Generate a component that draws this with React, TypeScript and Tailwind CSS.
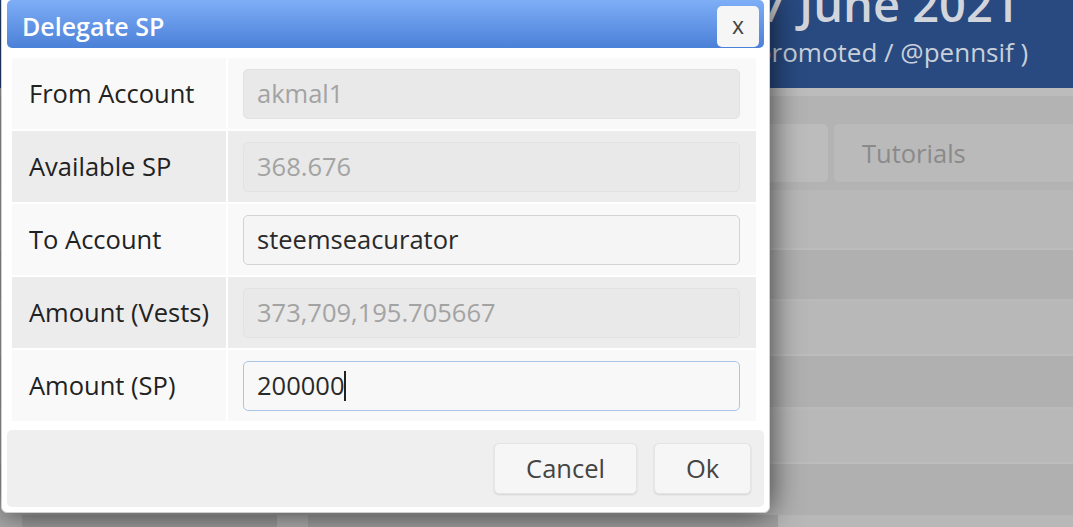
import React from 'react';

const rows = [
  { label: 'From Account', value: 'akmal1', disabled: true },
  { label: 'Available SP', value: '368.676', disabled: true },
  { label: 'To Account', value: 'steemseacurator', disabled: false },
  { label: 'Amount (Vests)', value: '373,709,195.705667', disabled: true },
  { label: 'Amount (SP)', value: '200000', disabled: false, focused: true },
];

function Field({ value, disabled, focused }: { value: string; disabled: boolean; focused?: boolean }) {
  if (disabled) {
    return (
      <div className="flex h-[50px] w-full items-center rounded-[5px] border border-[#e2e2e2] bg-[#e9e9e9] px-[13px] text-[25.5px] text-[#a3a3a3]">
        {value}
      </div>
    );
  }
  return (
    <div
      className={
        focused
          ? 'flex h-[50px] w-full items-center rounded-[5px] border border-[#a9c6e6] bg-[#f8f8f8] px-[13px] text-[25.5px] text-[#2a2a2a]'
          : 'flex h-[50px] w-full items-center rounded-[5px] border border-[#d3d3d3] bg-[#f5f5f5] px-[13px] text-[25.5px] text-[#2a2a2a]'
      }
    >
      <span>{value}</span>
      {focused && <span className="h-[30px] w-[2px] bg-[#222]" />}
    </div>
  );
}

function Background() {
  return (
    <div className="flex h-[527px] w-full flex-col overflow-hidden bg-[#b6b6b6]">
      <div className="flex h-[88px] shrink-0 flex-col bg-[#284a80] pl-[760px] text-[#d2d6dc]">
        <div className="mt-[-26px] whitespace-nowrap text-[47px] font-semibold leading-[60px]">7 June 2021</div>
        <div className="ml-[-12px] mt-0 whitespace-nowrap text-[26px] leading-[36px] text-[#c9d0da]">
          (promoted / @pennsif )
        </div>
      </div>
      <div className="h-[8px] shrink-0 bg-[#bcbcbc]" />
      <div className="flex h-[94px] shrink-0 items-start gap-[6px] bg-[#b3b3b3] pl-[560px] pt-[28px]">
        <div className="h-[58px] w-[268px] rounded-[5px] bg-[#bcbcbc]" />
        <div className="flex h-[58px] flex-1 items-center rounded-l-[5px] bg-[#bababa] pl-[28px] text-[25.5px] text-[#8a8a8a]">
          Tutorials
        </div>
      </div>
      <div className="h-[60px] shrink-0 border-b-2 border-[#bdbdbd] bg-[#b8b8b8]" />
      <div className="h-[51px] shrink-0 border-b-2 border-[#bababa] bg-[#b0b0b0]" />
      <div className="h-[55px] shrink-0 border-b-2 border-[#bdbdbd] bg-[#b8b8b8]" />
      <div className="h-[53px] shrink-0 border-b-2 border-[#bababa] bg-[#b0b0b0]" />
      <div className="h-[55px] shrink-0 border-b-2 border-[#bdbdbd] bg-[#b8b8b8]" />
      <div className="h-[51px] shrink-0 bg-[#b0b0b0]" />
      <div className="flex flex-1 bg-[#b8b8b8]">
        <div className="w-[22px] bg-[#acacac]" />
        <div className="w-[255px] bg-[#9e9e9e]" />
        <div className="w-[31px] bg-[#b0b0b0]" />
        <div className="w-[470px] bg-[#a2a2a2]" />
        <div className="flex-1 bg-[#b8b8b8]" />
      </div>
    </div>
  );
}

export default function App() {
  return (
    <div className="relative h-[527px] w-[1073px] overflow-hidden font-['Open_Sans','Noto_Sans',sans-serif]">
      <Background />
      <div className="absolute left-[1px] top-[-6px] flex h-[519px] w-[769px] flex-col rounded-[6px] border border-[#d0d0d0] bg-white p-[5px] shadow-[0_0_32px_rgba(0,0,0,0.7)]">
        <div className="flex h-[48px] shrink-0 items-center justify-between rounded-[5px] bg-gradient-to-b from-[#7eaef6] to-[#4b80d8] pl-[15px] pr-[5px] pt-[5px]">
          <span className="text-[25px] font-semibold text-white">Delegate SP</span>
          <button
            type="button"
            className="flex h-[41px] w-[42px] items-center justify-center rounded-[5px] bg-[#f6f6f6] pb-[3px] text-[23px] text-[#444]"
          >
            x
          </button>
        </div>
        <div className="mt-[10px] flex flex-col gap-[2px] pl-[5px] pr-[8px]">
          {rows.map((r, i) => (
            <div key={r.label} className="flex h-[71px] gap-[2px] bg-white">
              <div
                className={
                  i % 2 === 0
                    ? 'flex w-[214px] items-center bg-[#f9f9f9] pl-[17px] text-[25.5px] text-[#222]'
                    : 'flex w-[214px] items-center bg-[#ececec] pl-[17px] text-[25.5px] text-[#222]'
                }
              >
                {r.label}
              </div>
              <div
                className={
                  i % 2 === 0
                    ? 'flex flex-1 items-center bg-[#f9f9f9] pl-[15px] pr-[16px]'
                    : 'flex flex-1 items-center bg-[#ececec] pl-[15px] pr-[16px]'
                }
              >
                <Field value={r.value} disabled={r.disabled} focused={r.focused} />
              </div>
            </div>
          ))}
        </div>
        <div className="mt-auto flex h-[77px] shrink-0 items-start justify-end gap-[17px] rounded-[5px] bg-[#efefef] pr-[13px] pt-[13px]">
          <button
            type="button"
            className="h-[51px] w-[143px] rounded-[5px] border border-[#e4e4e4] bg-[#f6f6f6] text-[25.5px] text-[#444] shadow-[0_1px_2px_rgba(0,0,0,0.12)]"
          >
            Cancel
          </button>
          <button
            type="button"
            className="h-[51px] w-[97px] rounded-[5px] border border-[#e4e4e4] bg-[#f6f6f6] text-[25.5px] text-[#444] shadow-[0_1px_2px_rgba(0,0,0,0.12)]"
          >
            Ok
          </button>
        </div>
      </div>
    </div>
  );
}
